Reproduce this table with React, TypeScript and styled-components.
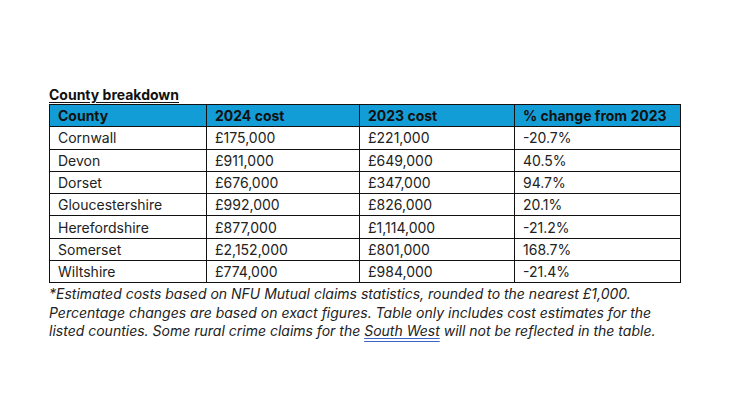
import React from "react";
import styled, { createGlobalStyle } from "styled-components";

const Global = createGlobalStyle`
  html, body { margin: 0; padding: 0; background: #ffffff; }
  body { font-family: Inter, "Liberation Sans", sans-serif; color: #1a1a1a; }
`;

const Page = styled.div`
  width: 752px;
  height: 419px;
  box-sizing: border-box;
  padding: 86px 0 0 49px;
  display: flex;
  flex-direction: column;
`;

const Title = styled.div`
  font-weight: 700;
  font-size: 14px;
  line-height: 17px;
  text-decoration: underline;
  text-underline-offset: 2px;
  color: #111;
`;

const Table = styled.table`
  border-collapse: collapse;
  width: 631px;
  table-layout: fixed;
  font-size: 14px;
  margin-top: 1px;
`;

const HeadCell = styled.th`
  background: #139dd6;
  border: 1px solid #111;
  height: 21.3px;
  padding: 0 0 0 8px;
  text-align: left;
  font-weight: 700;
  color: #111;
`;

const Cell = styled.td`
  border: 1px solid #111;
  height: 21.3px;
  padding: 0 0 0 8px;
  text-align: left;
  color: #222;
`;

const Note = styled.p`
  margin: 2px 0 0;
  font-style: italic;
  font-size: 14px;
  line-height: 18.5px;
  color: #222;
  width: 640px;
`;

const Link = styled.span`
  text-decoration: underline double #3e64c8;
  text-underline-offset: 2px;
`;

const rows: [string, string, string, string][] = [
  ["Cornwall", "£175,000", "£221,000", "-20.7%"],
  ["Devon", "£911,000", "£649,000", "40.5%"],
  ["Dorset", "£676,000", "£347,000", "94.7%"],
  ["Gloucestershire", "£992,000", "£826,000", "20.1%"],
  ["Herefordshire", "£877,000", "£1,114,000", "-21.2%"],
  ["Somerset", "£2,152,000", "£801,000", "168.7%"],
  ["Wiltshire", "£774,000", "£984,000", "-21.4%"],
];

export default function App() {
  return (
    <>
      <Global />
      <Page>
        <Title>County breakdown</Title>
        <Table>
          <colgroup>
            <col style={{ width: 157 }} />
            <col style={{ width: 153 }} />
            <col style={{ width: 155 }} />
            <col style={{ width: 166 }} />
          </colgroup>
          <thead>
            <tr>
              <HeadCell>County</HeadCell>
              <HeadCell>2024 cost</HeadCell>
              <HeadCell>2023 cost</HeadCell>
              <HeadCell>% change from 2023</HeadCell>
            </tr>
          </thead>
          <tbody>
            {rows.map((r) => (
              <tr key={r[0]}>
                {r.map((c, i) => (
                  <Cell key={i}>{c}</Cell>
                ))}
              </tr>
            ))}
          </tbody>
        </Table>
        <Note>
          *Estimated costs based on NFU Mutual claims statistics, rounded to the nearest £1,000.
          <br />
          Percentage changes are based on exact figures. Table only includes cost estimates for the
          <br />
          listed counties. Some rural crime claims for the <Link>South West</Link> will not be reflected in the table.
        </Note>
      </Page>
    </>
  );
}
